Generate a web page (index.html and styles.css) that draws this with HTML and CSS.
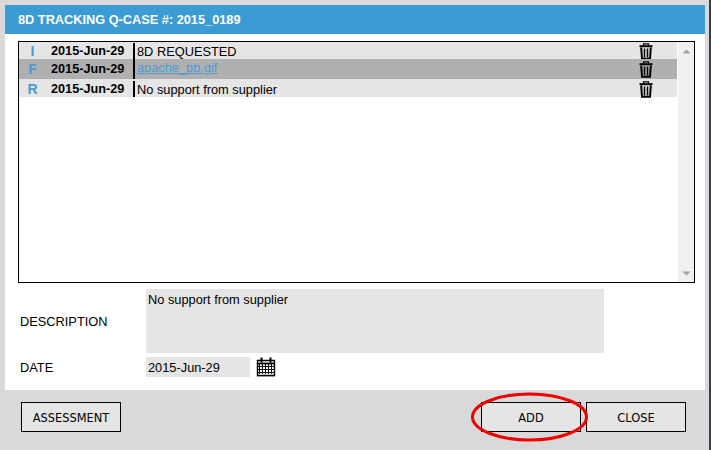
FILE: index.html
```html
<!DOCTYPE html>
<html lang="en">
<head>
<meta charset="utf-8">
<title>8D Tracking</title>
<link rel="stylesheet" href="styles.css">
</head>
<body>
<svg width="0" height="0" class="defs">
  <symbol id="trash" viewBox="0 0 14 17">
    <path d="M0.5 3.2h13" fill="none" stroke="#000" stroke-width="2"/>
    <path d="M4.5 2.5v-1.7h5v1.7" fill="none" stroke="#000" stroke-width="1.2"/>
    <path d="M2.2 4.5l.8 11.3h8l.8-11.3" fill="none" stroke="#000" stroke-width="2"/>
    <path d="M5.5 5.5v9M8.5 5.5v9" fill="none" stroke="#000" stroke-width="1.5"/>
  </symbol>
</svg>
<main class="modal">
  <header class="modal-title">8D TRACKING Q-CASE #: 2015_0189</header>
  <section class="modal-body">
    <div class="list">
      <div class="rows">
        <div class="row row-1">
          <span class="type">I</span><span class="date">2015-Jun-29</span><span class="text">8D REQUESTED</span>
          <svg class="trash"><use href="#trash"/></svg>
        </div>
        <div class="row row-2">
          <span class="type">F</span><span class="date">2015-Jun-29</span><span class="text"><a href="#">apache_pb.gif</a></span>
          <svg class="trash"><use href="#trash"/></svg>
        </div>
        <div class="row row-3">
          <span class="type">R</span><span class="date">2015-Jun-29</span><span class="text">No support from supplier</span>
          <svg class="trash"><use href="#trash"/></svg>
        </div>
      </div>
      <div class="scrollbar">
        <svg class="arrow" width="9" height="5" viewBox="0 0 9 5"><path d="M4.5 0.5L8.5 4.5H0.5Z" fill="#a3a3a3"/></svg>
        <svg class="arrow" width="9" height="5" viewBox="0 0 9 5"><path d="M0.5 0.5H8.5L4.5 4.5Z" fill="#a3a3a3"/></svg>
      </div>
    </div>
    <div class="field field-desc">
      <label class="label">DESCRIPTION</label>
      <div class="textarea">No support from supplier</div>
    </div>
    <div class="field field-date">
      <label class="label">DATE</label>
      <div class="input">2015-Jun-29</div>
      <svg class="calendar" width="20" height="20" viewBox="0 0 20 20">
        <path d="M1.5 3.500h17v15h-17z" fill="#fff" stroke="#000" stroke-width="1.400"/>
        <path d="M5.500 0.500v5M14.500 0.500v5" stroke="#000" stroke-width="2"/>
        <path d="M1 6.500h18" stroke="#000" stroke-width="1.800"/>
        <path d="M3.500 7v10M6.500 7v10M9.500 7v10M12.500 7v10M15.500 7v10M2 9.500h16M2 12.500h16M2 15.500h16" stroke="#111" stroke-width="1"/>
        <path d="M1 19.500h18" stroke="#999" stroke-width="1"/>
      </svg>
    </div>
  </section>
  <footer class="modal-footer">
    <button class="btn">ASSESSMENT</button>
    <span class="spacer"></span>
    <span class="add-wrap">
      <button class="btn">ADD</button>
      <svg class="circle" width="120" height="50" viewBox="0 0 120 50"><ellipse cx="60.500" cy="25" rx="57" ry="23" fill="none" stroke="#f00000" stroke-width="3"/></svg>
    </span>
    <button class="btn">CLOSE</button>
  </footer>
</main>
<div class="edge"></div>
</body>
</html>
```
FILE: styles.css
```css
* { box-sizing: border-box; }
html, body { margin: 0; padding: 0; }
body {
  width: 711px;
  height: 450px;
  overflow: hidden;
  background: #d9d9d9;
  padding: 5px 0 0 5px;
  font: 12.800px/15px "Liberation Sans", Arial, sans-serif;
  color: #000;
  display: flex;
  position: relative;
}
.defs { position: absolute; }
.modal { width: 700px; flex: none; }
.modal-title {
  height: 29px;
  background: #3b9bd3;
  color: #fff;
  font-size: 12.750px;
  font-weight: 700;
  line-height: 29px;
  padding-left: 13px;
}
.modal-body {
  background: #fff;
  height: 356px;
  padding: 7px 10px 0 13px;
}
.list {
  width: 677px;
  height: 242px;
  border: 1px solid #000;
  display: flex;
}
.rows { flex: 1; }
.row {
  display: flex;
  align-items: flex-start;
  background: #e5e5e5;
  position: relative;
}
.row-1 { height: 17px; }
.row-2 { height: 20px; background: #b0b0b0; }
.row-3 { height: 18px; }
.type {
  width: 27px;
  text-align: center;
  color: #4a9bd0;
  font-weight: 700;
  font-size: 14px;
  line-height: 19px;
}
.row-2 .type { line-height: 21px; }
.row-3 .type { line-height: 21px; }
.date {
  width: 87px;
  padding-left: 5px;
  font-size: 12.700px;
  font-weight: 700;
  line-height: 19px;
}
.row-2 .date { line-height: 21px; }
.row-3 .date { line-height: 21px; }
.text {
  flex: 1;
  border-left: 2px solid #000;
  padding-left: 2px;
  height: 16px;
  margin-top: 1px;
  line-height: 17px;
}
.row-2 .text { height: 20px; margin-top: 0; line-height: 18px; }
.row-3 .text { margin-top: 2px; line-height: 17px; }
.text a { color: #4a9bd0; }
.trash { width: 14px; height: 17px; margin: 1px 24px 0 0; flex: none; }
.row-2 .trash { margin-top: 2px; }
.row-3 .trash { margin-top: 2px; }
.scrollbar {
  width: 16px;
  margin-left: 1px;
  background: #f0f0f0;
  display: flex;
  flex-direction: column;
  justify-content: space-between;
  align-items: center;
  padding: 7px 0 6px;
}
.arrow { display: block; }
.field { display: flex; }
.label { width: 128px; padding: 2px 0 0 2px; }
.field-desc { margin-top: 6px; align-items: center; line-height: 16px; }
.textarea {
  width: 458px;
  height: 64px;
  background: #e5e5e5;
  padding: 3px 2px;
}
.field-date { margin-top: 4px; align-items: center; line-height: 16px; }
.input {
  width: 104px;
  height: 20px;
  line-height: 21px;
  background: #e5e5e5;
  padding-left: 2px;
}
.calendar { margin-left: 6px; }
.modal-footer {
  display: flex;
  align-items: flex-start;
  padding: 12px 19px 0 16px;
  gap: 5px;
}
.spacer { flex: 1; }
.add-wrap { position: relative; display: flex; }
.btn {
  width: 100px;
  height: 30px;
  padding: 2px 0 0;
  background: #e5e5e5;
  border: 1px solid #000;
  border-radius: 0;
  color: #000;
  font: 11.400px "DejaVu Sans", sans-serif;
}
.circle {
  position: absolute;
  left: -12px;
  top: -10px;
  pointer-events: none;
}
.edge {
  position: absolute;
  top: 0;
  right: 0;
  width: 2px;
  height: 450px;
  background: #3a3f42;
}
```
